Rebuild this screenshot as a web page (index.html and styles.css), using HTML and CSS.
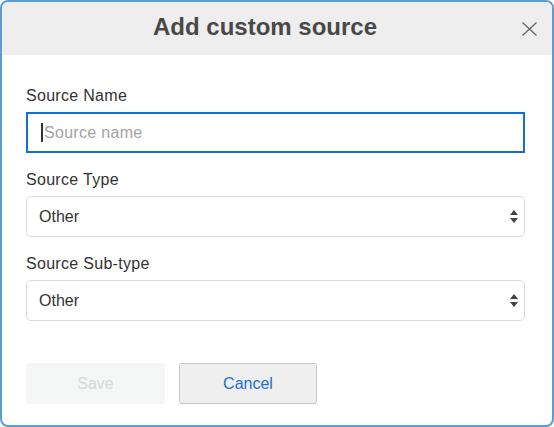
FILE: index.html
```html
<!DOCTYPE html>
<html lang="en">
<head>
<meta charset="utf-8">
<title>Add custom source</title>
<link rel="stylesheet" href="styles.css">
</head>
<body>
<div class="modal">
  <div class="modal-header">
    <h1 class="modal-title">Add custom source</h1>
    <button class="close" aria-label="Close">
      <svg width="15" height="14" viewBox="0 0 15 14"><path d="M0.5 0.5 L14.5 13.5 M14.5 0.5 L0.5 13.5" stroke="#666" stroke-width="1.3" fill="none"/></svg>
    </button>
  </div>
  <div class="modal-body">
    <div class="field">
      <label class="label">Source Name</label>
      <div class="input"><span class="caret"></span><span class="placeholder">Source name</span></div>
    </div>
    <div class="field">
      <label class="label">Source Type</label>
      <div class="select"><span>Other</span>
        <svg class="arrows" width="8" height="14" viewBox="0 0 8 14"><path d="M4 0 L8 5 L0 5 Z M0 8 L8 8 L4 13 Z" fill="#444"/></svg>
      </div>
    </div>
    <div class="field">
      <label class="label">Source Sub-type</label>
      <div class="select"><span>Other</span>
        <svg class="arrows" width="8" height="14" viewBox="0 0 8 14"><path d="M4 0 L8 5 L0 5 Z M0 8 L8 8 L4 13 Z" fill="#444"/></svg>
      </div>
    </div>
    <div class="actions">
      <button class="btn btn-save" disabled>Save</button>
      <button class="btn btn-cancel">Cancel</button>
    </div>
  </div>
</div>
</body>
</html>
```
FILE: styles.css
```css
html, body {
  margin: 0;
  padding: 0;
  background: #fff;
}
body {
  font-family: "Liberation Sans", Arial, Helvetica, sans-serif;
  color: #333;
}
.modal {
  width: 554px;
  height: 427px;
  box-sizing: border-box;
  border: 2px solid #5d9bd7;
  border-radius: 8px;
  overflow: hidden;
  background: #fff;
}
.modal-header {
  position: relative;
  height: 53px;
  box-sizing: border-box;
  background: #eeeeee;
  display: flex;
  align-items: center;
  padding: 0 24px 4px 0;
}
.modal-title {
  flex: 1;
  margin: 0;
  text-align: center;
  font-size: 24px;
  line-height: 24px;
  font-weight: bold;
  color: #484848;
}
.close {
  position: absolute;
  right: 15px;
  top: 20px;
  width: 15px;
  height: 14px;
  padding: 0;
  border: 0;
  background: none;
  display: block;
}
.close svg { display: block; }
.modal-body {
  padding: 31px 27px 0 24px;
}
.field {
  margin-bottom: 17px;
}
.label {
  display: block;
  font-size: 16px;
  line-height: 20px;
  letter-spacing: 0.3px;
  color: #333;
  margin-bottom: 6px;
}
.input {
  height: 41px;
  box-sizing: border-box;
  border: 2px solid #1470cc;
  display: flex;
  align-items: center;
  padding-left: 13px;
  font-size: 16px;
  letter-spacing: 0.3px;
}
.caret {
  display: inline-block;
  width: 1.5px;
  height: 19px;
  background: #333;
  margin-right: 1.5px;
}
.placeholder {
  color: #a3a3a3;
}
.select {
  height: 41px;
  box-sizing: border-box;
  border: 1px solid #dadada;
  border-radius: 5px;
  display: flex;
  align-items: center;
  justify-content: space-between;
  padding: 0 6px 0 12px;
  font-size: 16px;
  color: #333;
}
.arrows { display: block; }
.actions {
  display: flex;
  gap: 14px;
  margin-top: 42px;
}
.btn {
  height: 41px;
  box-sizing: border-box;
  font-family: "Liberation Sans", Arial, sans-serif;
  font-size: 16px;
  border-radius: 3px;
  padding: 0;
}
.btn-save {
  width: 139px;
  background: #f5f6f6;
  border: 1px solid #f5f6f6;
  color: #d8d8d8;
}
.btn-cancel {
  width: 138px;
  background: #efefef;
  border: 1px solid #c6c6c6;
  color: #1a70d0;
}
```
